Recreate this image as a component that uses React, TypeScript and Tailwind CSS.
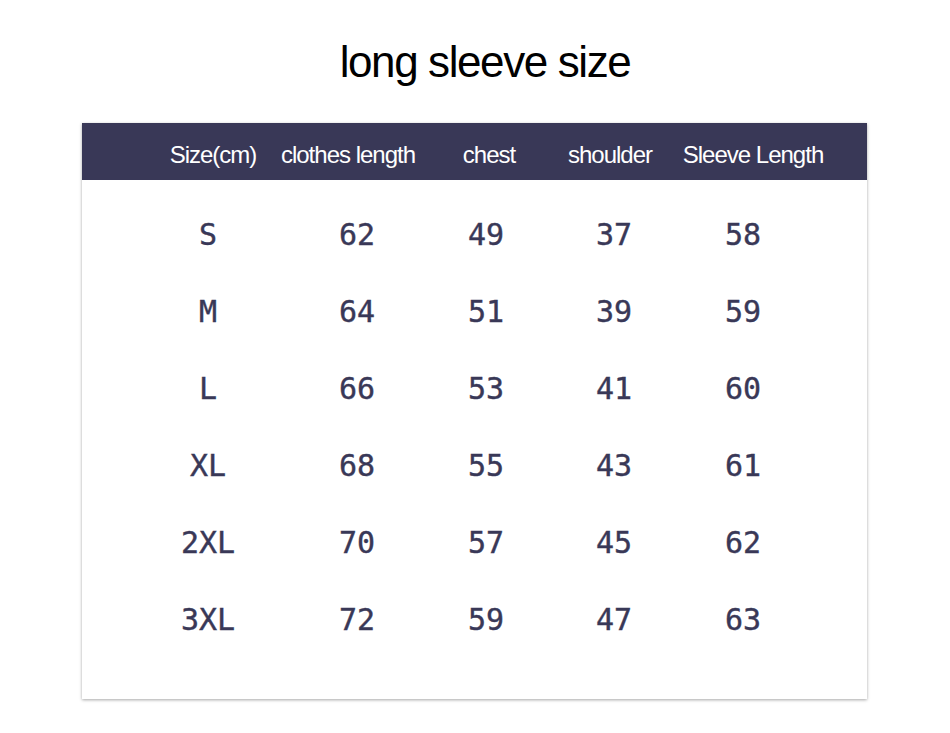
const headers = ['Size(cm)', 'clothes length', 'chest', 'shoulder', 'Sleeve Length'];

const rows = [
  ['S', '62', '49', '37', '58'],
  ['M', '64', '51', '39', '59'],
  ['L', '66', '53', '41', '60'],
  ['XL', '68', '55', '43', '61'],
  ['2XL', '70', '57', '45', '62'],
  ['3XL', '72', '59', '47', '63'],
];

export default function App() {
  return (
    <div className="w-[950px] h-[733px] bg-white pt-[36px] font-['Liberation_Sans',Arial,sans-serif]">
      <h1 className="text-center text-[44px] leading-[52px] tracking-[-1.4px] text-black pl-[20px]">
        long sleeve size
      </h1>

      <div className="ml-[82px] mt-[35px] w-[785px] h-[576px] bg-white shadow-[0_1px_3px_rgba(0,0,0,0.35)]">
        <div className="h-[57px] pt-[7px] bg-[#393857] text-white text-[24px] tracking-[-1px] pl-[66px] grid grid-cols-[130px_140px_142px_100px_186px] items-center">
          {headers.map((h) => (
            <div key={h} className="text-center whitespace-nowrap">{h}</div>
          ))}
        </div>

        <div className="pt-[16px] pl-[52px] font-['DejaVu_Sans_Mono',monospace] text-[30px] text-[#393857] [-webkit-text-stroke:0.4px_#393857]">
          {rows.map((r) => (
            <div key={r[0]} className="h-[77px] grid grid-cols-[148px_150px_108px_148px_110px] items-center">
              {r.map((c, i) => (
                <div key={i} className="text-center">{c}</div>
              ))}
            </div>
          ))}
        </div>
      </div>
    </div>
  );
}
